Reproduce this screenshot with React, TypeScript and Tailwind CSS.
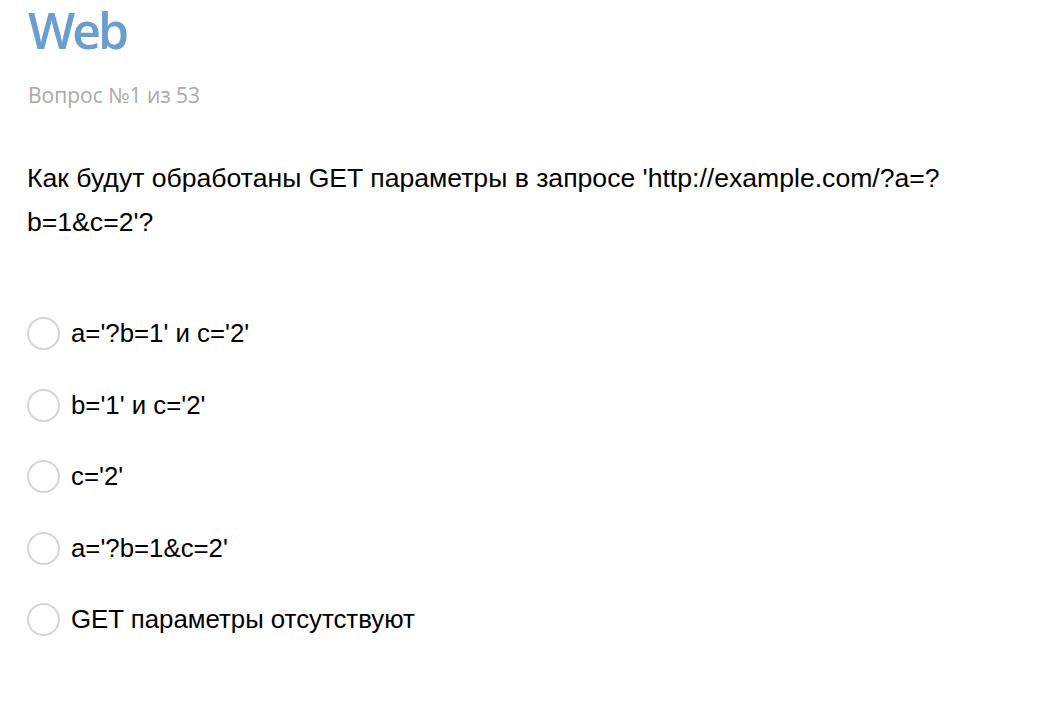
const options = [
  "a='?b=1' и c='2'",
  "b='1' и c='2'",
  "c='2'",
  "a='?b=1&c=2'",
  'GET параметры отсутствуют',
]

function Option({ label }: { label: string }) {
  return (
    <label className="flex h-[71.5px] items-center gap-[11px]">
      <span className="h-[33px] w-[33px] shrink-0 rounded-full border-2 border-[#d6d6d6] bg-white" />
      <span className="text-[25.8px] text-black">{label}</span>
    </label>
  )
}

export default function App() {
  return (
    <div className="min-h-[704px] w-[1052px] bg-white pl-[27px] font-['Liberation_Sans',Arial,sans-serif]">
      <h1 className="pl-[1px] font-['Open_Sans',sans-serif] text-[50px] font-semibold leading-[60px] tracking-[-3px] text-[#6b9dcd]">
        Web
      </h1>
      <div className="mt-[21px] pl-[1px] font-['Open_Sans',sans-serif] text-[21px] leading-[28px] text-[#a9a9a9]">
        Вопрос №1 из 53
      </div>
      <p className="mt-[47px] max-w-[980px] text-[26.6px] leading-[44px] text-black">
        Как будут обработаны GET параметры в запросе 'http://example.com/?a=?
        <br />
        b=1&amp;c=2'?
      </p>
      <div className="mt-[54px] flex flex-col">
        {options.map((o) => (
          <Option key={o} label={o} />
        ))}
      </div>
    </div>
  )
}
